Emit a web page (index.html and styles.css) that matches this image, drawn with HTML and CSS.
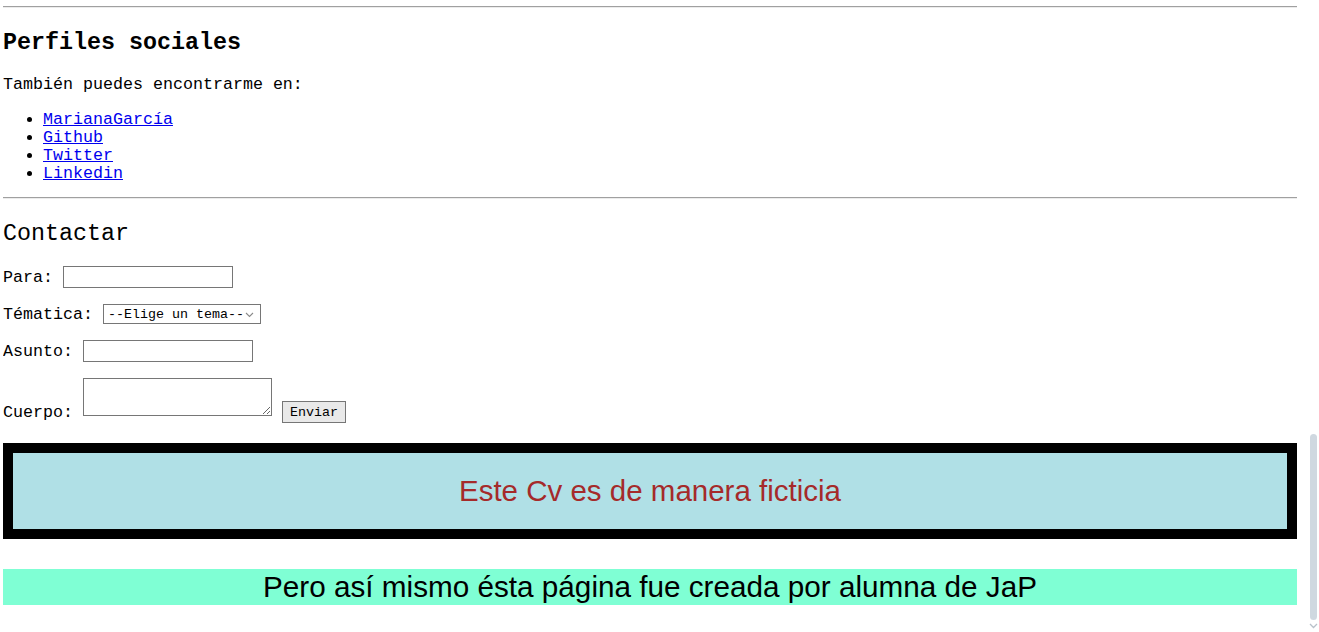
FILE: index.html
```html
<!DOCTYPE html>
<html lang="es">
<head>
<meta charset="utf-8">
<title>CV</title>
<link rel="stylesheet" href="styles.css">
</head>
<body>
<hr class="rule rule-top">
<section class="social">
  <h2 class="title title-bold">Perfiles sociales</h2>
  <p class="text">También puedes encontrarme en:</p>
  <ul class="links">
    <li><a href="#">MarianaGarcía</a></li>
    <li><a href="#">Github</a></li>
    <li><a href="#">Twitter</a></li>
    <li><a href="#">Linkedin</a></li>
  </ul>
</section>
<hr class="rule">
<section class="contact">
  <h2 class="title title-normal">Contactar</h2>
  <form class="form">
    <div class="row row-para">
      <label class="label">Para:</label>
      <input type="text" class="field field-para">
    </div>
    <div class="row row-theme">
      <label class="label">Tématica:</label>
      <span class="select-wrap">
        <select class="select">
          <option>--Elige un tema--</option>
        </select>
        <svg class="select-arrow" width="9" height="6" viewBox="0 0 9 6"><path d="M1 1 L4.5 4.5 L8 1" fill="none" stroke="#8a8a8a" stroke-width="1.1"/></svg>
      </span>
    </div>
    <div class="row row-asunto">
      <label class="label">Asunto:</label>
      <input type="text" class="field field-asunto">
    </div>
    <div class="row row-cuerpo">
      <label class="label label-cuerpo">Cuerpo:</label>
      <textarea class="area"></textarea>
      <button type="button" class="button">Enviar</button>
    </div>
  </form>
</section>
<div class="notice">Este Cv es de manera ficticia</div>
<h1 class="credit">Pero así mismo ésta página fue creada por alumna de JaP</h1>
<div class="scrollbar">
  <div class="scroll-thumb"></div>
  <svg class="scroll-arrow" width="9" height="6" viewBox="0 0 9 6"><path d="M1 1 L4.5 4.5 L8 1" fill="none" stroke="#b9c1ca" stroke-width="1.3"/></svg>
</div>
</body>
</html>
```
FILE: styles.css
```css
html {
  margin: 0;
  padding: 0;
  background: #fff;
}

body {
  margin: 0 22px 0 3px;
  padding-top: 6px;
  font-family: "Liberation Mono", "Courier New", monospace;
  font-size: 16.67px;
  line-height: 18px;
  color: #000;
  overflow: hidden;
  height: 626px;
}

.rule {
  margin: 0;
  height: 0;
  border: 0;
  border-top: 1px solid #a0a0a0;
  border-bottom: 1px solid #ececec;
}

.title {
  margin: 20px 0 18px 0;
  padding-top: 2px;
  font-size: 23.33px;
  line-height: 27px;
}

.title-bold {
  font-weight: bold;
}

.title-normal {
  font-weight: normal;
}

.text {
  margin: 16px 0 15px 0;
  padding-top: 1px;
}

.links {
  margin: 15px 0 14px 0;
  padding: 2px 0 0 40px;
}

.links a {
  color: #0000ee;
  text-decoration: underline;
}

.form {
  margin: 0;
}

.row {
  display: flex;
  align-items: center;
  gap: 10px;
  margin-bottom: 16px;
}

.row-cuerpo {
  align-items: flex-end;
  margin-bottom: 0;
}

.label {
  white-space: pre;
  padding-top: 2px;
}

.label-cuerpo {
  padding-top: 0;
  margin-bottom: 1px;
}

.field {
  box-sizing: border-box;
  width: 170px;
  height: 22px;
  margin: 0;
  border: 1px solid #767676;
  padding: 1px 2px;
  font-family: "Liberation Mono", monospace;
  font-size: 13.33px;
  background: #fff;
}

.select-wrap {
  position: relative;
  display: block;
  width: 158px;
  height: 20px;
}

.select {
  -webkit-appearance: none;
  appearance: none;
  box-sizing: border-box;
  width: 158px;
  height: 20px;
  margin: 0;
  border: 1px solid #767676;
  border-radius: 0;
  padding: 0 0 0 4px;
  background: #fff;
  font-family: "Liberation Mono", monospace;
  font-size: 13.33px;
  color: #000;
}

.select-arrow {
  position: absolute;
  right: 7px;
  top: 8px;
}

.area {
  box-sizing: border-box;
  width: 189px;
  height: 38px;
  margin: 0 0 7px 0;
  border: 1px solid #767676;
  padding: 2px;
  font-family: "Liberation Mono", monospace;
  font-size: 13.33px;
}

.button {
  box-sizing: border-box;
  width: 64px;
  height: 22px;
  margin: 0;
  padding: 0;
  border: 1px solid #767676;
  border-radius: 0;
  background: #e9e9e9;
  font-family: "Liberation Mono", monospace;
  font-size: 13.33px;
  color: #000;
}

.notice {
  margin-top: 20px;
  border: 10px solid #000;
  background: #b0e0e6;
  height: 76px;
  line-height: 76px;
  text-align: center;
  font-family: "Liberation Sans", Arial, sans-serif;
  font-size: 29.5px;
  color: #a52a2a;
}

.credit {
  margin: 30px 0 0 0;
  height: 36px;
  line-height: 36px;
  background: #7fffd4;
  text-align: center;
  font-family: "Liberation Sans", Arial, sans-serif;
  font-size: 29.7px;
  font-weight: normal;
  color: #000;
}

.scrollbar {
  position: fixed;
  top: 0;
  right: 0;
  width: 15px;
  height: 632px;
}

.scroll-thumb {
  position: absolute;
  left: 6px;
  top: 434px;
  width: 7px;
  height: 186px;
  border-radius: 4px;
  background: #cfd8e0;
}

.scroll-arrow {
  position: absolute;
  left: 5px;
  top: 623px;
}
```
